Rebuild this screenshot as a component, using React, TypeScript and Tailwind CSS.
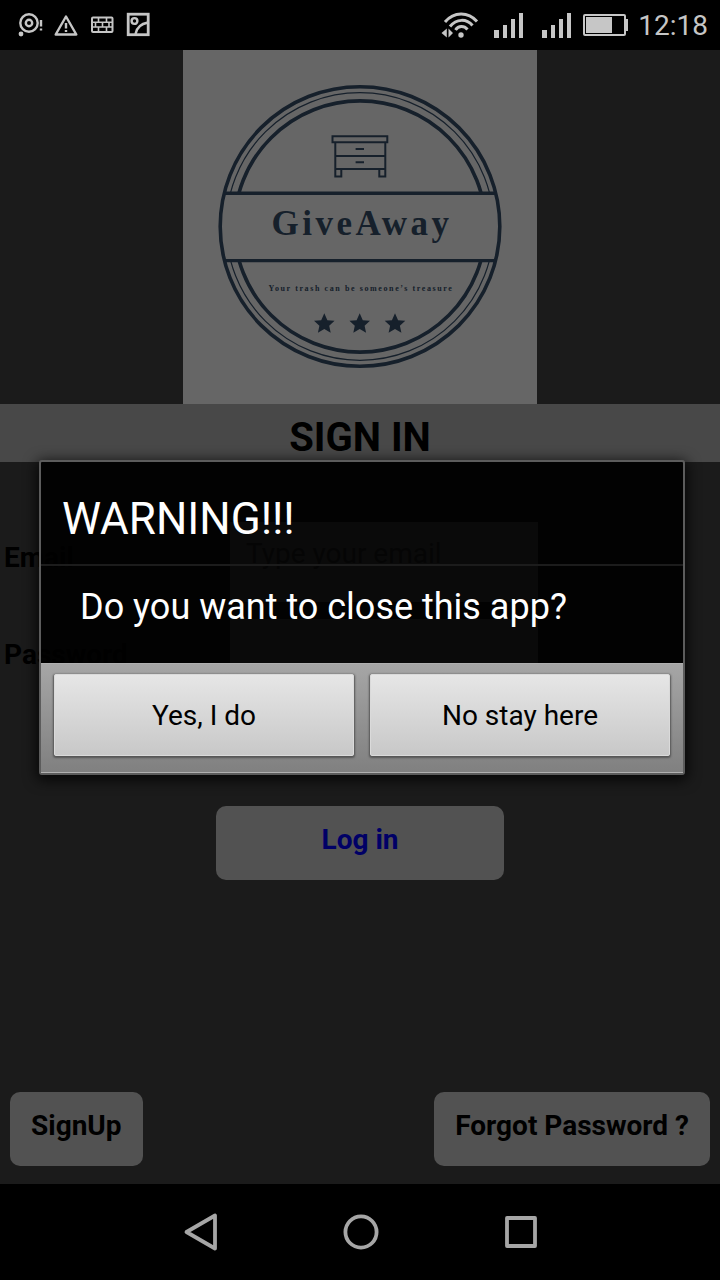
import React from "react";

const STAR = "M0 -10.5 L3.1 -3.6 L10.3 -3 L4.9 1.9 L6.4 9 L0 5.3 L-6.4 9 L-4.9 1.9 L-10.3 -3 L-3.1 -3.6 Z";

function Logo() {
  return (
    <svg viewBox="0 0 354 354" className="w-[354px] bg-white" role="img" aria-label="GiveAway logo">
      <defs>
        <clipPath id="rings">
          <rect x="0" y="0" width="354" height="143" />
          <rect x="0" y="211" width="354" height="143" />
        </clipPath>
      </defs>
      <g fill="none" stroke="#38506c">
        <circle cx="177" cy="176.500" r="139.800" strokeWidth="3.600" />
        <g clipPath="url(#rings)">
          <circle cx="177" cy="176.500" r="133.800" strokeWidth="1.200" />
          <circle cx="177" cy="176.500" r="125.600" strokeWidth="3.600" />
        </g>
        <path d="M42 143.300H312M42 210.600H312" strokeWidth="3.400" />
        <path
          d="M149.500 86.300H204.300V92.300H149.500ZM152.300 92.300V126.500H158.300V119M202.300 92.300V126.500H196.300V119M152.300 106H202.300M152.300 119H202.300M172.600 99H181M172.600 112.200H181"
          strokeWidth="2"
        />
      </g>
      <g fill="#38506c" textAnchor="middle">
        <text x="179" y="185" className="font-['Liberation_Serif',serif] text-[35px] font-bold tracking-widest">
          GiveAway
        </text>
        <text x="178" y="241" className="font-['Liberation_Serif',serif] text-[8px] font-bold tracking-[0.2em]">
          Your trash can be someone’s treasure
        </text>
        <path transform="translate(141.300 273.800)" d={STAR} />
        <path transform="translate(176.700 273.800)" d={STAR} />
        <path transform="translate(212 273.800)" d={STAR} />
      </g>
    </svg>
  );
}

function StatusBar() {
  return (
    <header className="flex h-[50px] items-center justify-between bg-black pr-3 pl-[18px] text-[#c6c6c6]">
      <svg width="134" height="26" viewBox="0 0 134 26" fill="none" stroke="currentColor" strokeWidth="2.400" aria-hidden="true">
        <circle cx="11" cy="11" r="8.700" />
        <circle cx="11" cy="11" r="3.200" />
        <circle cx="3" cy="22" r="2.400" fill="currentColor" stroke="none" />
        <path d="M23 8V14.500M23 16.500V18.500" />
        <path d="M48 4.500L58.300 22.500H37.700Z" strokeLinejoin="round" />
        <path d="M48 11V16.500M48 18V20" />
        <rect x="74" y="5.500" width="20.500" height="14.500" rx="1" strokeWidth="2" />
        <path d="M74 10.300H94M74 15H94M80.500 6V10M88.500 6V10M77.500 10V15M84.500 10V15M91 10V15M80.500 15V20M88.500 15V20" strokeWidth="1.600" />
        <rect x="110.200" y="2.200" width="20" height="20.500" strokeWidth="2.800" />
        <circle cx="116.500" cy="9" r="2.900" />
        <path d="M117.500 22C118.500 15.500 122 12 130 10.500" />
      </svg>
      <div className="flex items-center gap-2.5">
        <svg width="188" height="30" viewBox="0 0 188 30" fill="none" stroke="currentColor" aria-hidden="true">
          <path d="M5 12C14 1.500 28 1.500 37 11.500" strokeWidth="3" />
          <path d="M10 16.500C16.500 8.500 26.500 8.500 32.500 15.500" strokeWidth="3" />
          <path d="M15.500 20C18.500 15.500 24 15.500 27.500 19.500" strokeWidth="3" />
          <circle cx="21" cy="25" r="2.700" fill="currentColor" stroke="none" />
          <path d="M6.800 18.500V27.500L1.500 23ZM8.500 18.500V27.500L13 23Z" fill="currentColor" stroke="none" />
          <path
            d="M54 20h5v8h-5zM63 15h4v13h-4zM71 9h4v19h-4zM79 3h4v25h-4zM102 20h5v8h-5zM111 15h4v13h-4zM119 9h4v19h-4zM127 3h4v25h-4z"
            fill="currentColor"
            stroke="none"
          />
          <rect x="144" y="5" width="41" height="20" rx="1" strokeWidth="2" />
          <path d="M146 7h26v16h-26zM186 9h2v12h-2z" fill="currentColor" stroke="none" />
        </svg>
        <time className="pt-0.5 text-[28px] leading-none">12:18</time>
      </div>
    </header>
  );
}

function Field({ id, label, type, placeholder }: { id: string; label: string; type: string; placeholder: string }) {
  return (
    <div className="flex">
      <label htmlFor={id} className="w-[230px] shrink-0 pt-[19px] pl-1 text-[28px] leading-[34px] font-bold">
        {label}
      </label>
      <input
        id={id}
        type={type}
        placeholder={placeholder}
        className="h-20 w-[308px] bg-white px-4 pb-[18px] text-[28px] placeholder:text-[#888]"
      />
    </div>
  );
}

const pageButton = "h-[74px] rounded-[10px] bg-[#cdcdcd] px-[21px] pb-[6px] text-[28px] font-bold";
const dialogButton =
  "h-[82px] flex-1 rounded-[2px] border border-[#dadada] bg-linear-to-b from-[#e6e6e6] to-[#c8c8c8] pt-0.5 text-[28px] text-black shadow-[0_1px_2px_1px_#555]";

function SignInPage() {
  return (
    <div className="flex flex-1 flex-col bg-[#444]">
      <div className="flex justify-center">
        <Logo />
      </div>
      <h1 className="h-[58px] bg-[#b4b4b4] pt-1 text-center text-[40px] leading-[60px] font-bold">SIGN IN</h1>
      <form className="flex flex-col pt-[60px]">
        <div className="flex flex-col gap-[17px]">
          <Field id="email" label="Email" type="email" placeholder="Type your email" />
          <Field id="password" label="Password" type="password" placeholder="" />
        </div>
        <button type="button" className={`${pageButton} mt-[107px] w-2/5 self-center text-[#0000ff]`}>
          Log in
        </button>
      </form>
      <div className="mt-auto flex justify-between px-2.5 pb-[18px]">
        <button type="button" className={pageButton}>SignUp</button>
        <button type="button" className={pageButton}>Forgot Password ?</button>
      </div>
    </div>
  );
}

function WarningDialog() {
  return (
    <div className="absolute inset-0 flex items-center bg-black/60 pr-[35px] pl-[39px]">
      <section
        role="alertdialog"
        aria-labelledby="warning-title"
        aria-describedby="warning-text"
        className="w-full rounded-[3px] border-2 border-[#5c5c5c] bg-black/90 text-white shadow-[0_3px_14px_2px_#000c]"
      >
        <h2 id="warning-title" className="border-b-2 border-[#1c1c1c] px-[21px] pt-[31px] pb-[19px] text-[44px] leading-[52px]">
          WARNING!!!
        </h2>
        <p id="warning-text" className="px-[39px] pt-5 pb-[35px] text-[36px] leading-[42px]">
          Do you want to close this app?
        </p>
        <div className="flex gap-4 border-y border-[#b0b0b0] bg-linear-to-b from-[#a6a6a6] to-[#808080] px-[13px] pt-2.5 pb-4">
          <button type="button" className={dialogButton}>Yes, I do</button>
          <button type="button" className={dialogButton}>No stay here</button>
        </div>
      </section>
    </div>
  );
}

function NavigationBar() {
  return (
    <nav className="flex h-24 items-center justify-center gap-[120px] bg-black text-[#a6a6a6]">
      <button type="button" aria-label="Back">
        <svg width="40" height="40" viewBox="0 0 40 40" fill="none" stroke="currentColor" strokeWidth="3.800" strokeLinejoin="round">
          <path d="M35 3.500V36.500L6.500 20Z" />
        </svg>
      </button>
      <button type="button" aria-label="Home">
        <svg width="40" height="40" viewBox="0 0 40 40" fill="none" stroke="currentColor" strokeWidth="3.800">
          <circle cx="21" cy="20" r="15.600" />
        </svg>
      </button>
      <button type="button" aria-label="Recent apps">
        <svg width="40" height="40" viewBox="0 0 40 40" fill="none" stroke="currentColor" strokeWidth="3.800" strokeLinejoin="round">
          <rect x="7" y="6" width="28" height="28" />
        </svg>
      </button>
    </nav>
  );
}

export default function App() {
  return (
    <div className="flex min-h-screen flex-col bg-black font-[Roboto,sans-serif] text-black">
      <StatusBar />
      <main className="relative flex flex-1 flex-col">
        <SignInPage />
        <WarningDialog />
      </main>
      <NavigationBar />
    </div>
  );
}
